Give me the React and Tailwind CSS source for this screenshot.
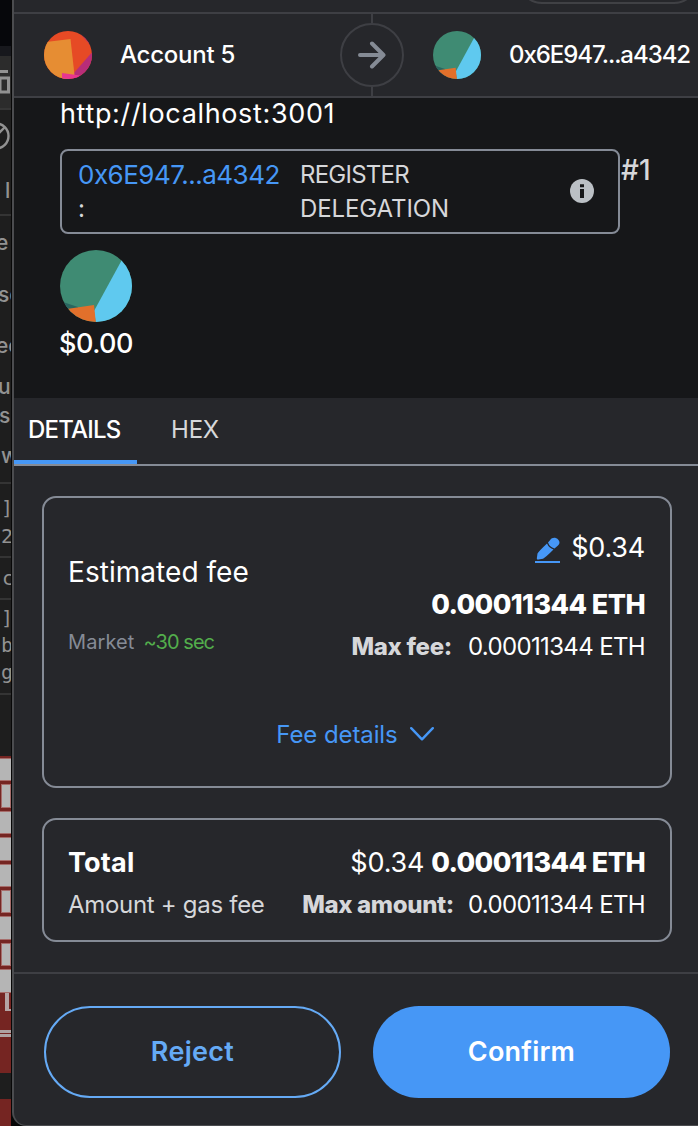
import React from "react";

function Jazzicon({ className }) {
  return (
    <svg viewBox="0 0 72 72" className={className}>
      <defs>
        <clipPath id="jazz-b"><circle cx="36" cy="36" r="36" /></clipPath>
      </defs>
      <g clipPath="url(#jazz-b)">
        <rect width="72" height="72" fill="#3f8b73" />
        <path d="M0 51 L18 57 L18 72 L0 72Z" fill="#2a6660" />
        <path d="M64 6 L34 61 L36 74 L74 74 L74 6Z" fill="#5fc9ef" />
        <path d="M0 60 L34 55 L36 74 L0 74Z" fill="#e2702b" />
      </g>
    </svg>
  );
}

function JazziconWarm({ className }) {
  return (
    <svg viewBox="0 0 48 48" className={className}>
      <defs>
        <clipPath id="jazz-a"><circle cx="24" cy="24" r="24" /></clipPath>
      </defs>
      <g clipPath="url(#jazz-a)">
        <rect width="48" height="48" fill="#e64a25" />
        <path d="M34 0 L48 0 L48 16Z" fill="#b22c76" />
        <path d="M50 19 L29 43 L30 50 L50 50Z" fill="#b82d79" />
        <path d="M-2 11.5 L26.500 8 L30.500 44 L20 50 L-2 50Z" fill="#e68d33" />
        <path d="M18 42 L36 44.500 L34 50 L18 50Z" fill="#e8368f" />
      </g>
    </svg>
  );
}

const pageLines = [
  { h: "h-[54px] -ml-[4px]", t: "e" },
  { h: "h-[50px] -ml-[2px]", t: "se" },
  { h: "h-[52px] -ml-[4px]", t: "ec" },
  { h: "h-[30px] -ml-[2px]", t: "u" },
  { h: "h-[28px] -ml-[1px]", t: "s." },
  { h: "h-[52px] pl-[1px]", t: "w" },
];

function Underlay() {
  return (
    <div className="flex h-[1126px] w-[11px] shrink-0 flex-col overflow-hidden bg-[#1e1e1e] text-[21px] font-medium text-[#929292]">
      <div className="h-[46px] shrink-0 bg-[#06070b]" />
      <div className="h-[10px] shrink-0 bg-[#17181d]" />
      <div className="h-[52px] shrink-0 bg-[#2c2c2c] pt-[13px]">
        <svg viewBox="0 0 11 26" className="h-[26px] w-[11px]" fill="none" stroke="#929292">
          <path d="M0 2.500 H8" strokeWidth="3" />
          <path d="M0 9 H8.500 V23 H0 Z" strokeWidth="3" />
        </svg>
      </div>
      <div className="h-[2px] shrink-0 bg-[#363636]" />
      <div className="h-[66px] shrink-0 pt-[11px]">
        <svg viewBox="0 0 11 30" className="h-[30px] w-[11px]" fill="none" stroke="#929292" strokeWidth="2.400">
          <circle cx="-4" cy="15" r="12.500" />
          <path d="M-2 13 L5 6" />
        </svg>
      </div>
      <div className="flex h-[38px] shrink-0 items-end pb-[7px] pl-[5px] leading-[32px]">l</div>
      <div className="h-[2px] shrink-0 bg-[#343434]" />
      {pageLines.map((l) => (
        <div key={l.t} className={`flex shrink-0 items-center whitespace-nowrap ${l.h}`}>{l.t}</div>
      ))}
      <div className="h-[2px] shrink-0 bg-[#343434]" />
      <div className="flex h-[72px] shrink-0 flex-col pt-[10px] font-['DejaVu_Sans_Mono',monospace] text-[20px] font-normal leading-[28px]">
        <span className="pl-px">]</span>
        <span className="pl-px">2</span>
      </div>
      <div className="h-[2px] shrink-0 bg-[#343434]" />
      <div className="flex h-[40px] shrink-0 items-center pl-[2px] font-['DejaVu_Sans_Mono',monospace] text-[20px] font-normal">c</div>
      <div className="h-[2px] shrink-0 bg-[#343434]" />
      <div className="flex h-[93px] shrink-0 flex-col pt-[5px] font-['DejaVu_Sans_Mono',monospace] text-[20px] font-normal leading-[27px]">
        <span className="pl-px">]</span>
        <span className="pl-px">b</span>
        <span className="pl-px">g</span>
      </div>
      <div className="h-[2px] shrink-0 bg-[#343434]" />
      <div className="h-[61px] shrink-0" />
      <div className="flex h-[317px] shrink-0 flex-col bg-[#752522] pt-[2px]">
        {[0, 1, 0, 0, 0, 1, 0, 1, 0].map((inset, i) => (
          <div key={i} className={inset ? "mb-[3px] ml-px h-[23.400px] shrink-0 border border-[#a66d6b] bg-[#b5b5b5]" : "mb-[3px] h-[23.400px] shrink-0 border-y border-[#a66d6b] bg-[#b5b5b5]"} />
        ))}
        <div className="-mt-[3px] ml-[5px] h-[18px] shrink-0 border-b-2 border-l-4 border-[#b5a5a5]" />
        <div className="mt-[19px] h-[7px] shrink-0 border-y-[3px] border-[#aea2a2]" />
      </div>
      <div className="h-[26px] shrink-0 bg-[#1e1e1e]" />
      <div className="h-[27px] shrink-0 bg-[#752522]" />
    </div>
  );
}

export default function App() {
  return (
    <div className="flex h-[1126px] w-[698px] overflow-hidden bg-[#070707] font-['Inter',sans-serif] text-white">
      <Underlay />
      <main className="ml-px flex h-[1126px] w-[686px] flex-col overflow-hidden rounded-bl-[14px] border-b border-l-2 border-[#4b4c4f] bg-[#26272b]">
        <div className="flex h-[12px] shrink-0 justify-end overflow-hidden">
          <div className="-mt-[44px] h-[48px] w-[180px] rounded-full border-2 border-[#404145]" />
        </div>

        <header className="flex h-[86px] shrink-0 items-center border-y-2 border-[#3e3f44] pl-[30px]">
          <JazziconWarm className="h-12 w-12 shrink-0" />
          <span className="ml-[28px] w-[220px] shrink-0 whitespace-nowrap text-[24px] font-medium tracking-[-0.25px]">Account 5</span>
          <div className="flex h-[82px] w-[64px] shrink-0 flex-col items-center">
            <div className="w-[2px] flex-1 bg-[#3e3f44]" />
            <div className="flex h-[64px] w-[64px] items-center justify-center rounded-full border-2 border-[#3e3f44]">
              <svg viewBox="0 0 28 28" className="h-7 w-7" fill="none" stroke="#858b95" strokeWidth="4" strokeLinecap="round" strokeLinejoin="round">
                <path d="M2 14 H25 M14 2.500 L25.500 14 L14 25.500" />
              </svg>
            </div>
            <div className="w-[2px] flex-1 bg-[#3e3f44]" />
          </div>
          <Jazzicon className="ml-[29px] h-12 w-12 shrink-0" />
          <span className="ml-[28px] whitespace-nowrap text-[24px] font-medium tracking-[-1.050px]">0x6E947...a4342</span>
        </header>

        <section className="flex h-[300px] shrink-0 flex-col bg-[#161719] pl-[46px]">
          <div className="h-[51px] whitespace-nowrap text-[27px] leading-[31px] tracking-[0.65px]">http://localhost:3001</div>
          <div className="flex">
            <div className="flex h-[85px] w-[560px] items-center rounded-[8px] border-2 border-[#858b96] px-4 text-[#d6d7da]">
              <div className="w-[222px] leading-[34px]">
                <div className="whitespace-nowrap text-[26px] tracking-[-0.5px] text-[#4697f6]">0x6E947...a4342</div>
                <div className="text-[24px]">:</div>
              </div>
              <div className="w-[190px] text-[24px] leading-[34px]">
                <div className="tracking-[-0.750px]">REGISTER</div>
                <div className="tracking-[-0.100px]">DELEGATION</div>
              </div>
              <svg viewBox="0 0 24 24" className="-mt-[2px] ml-auto mr-2 h-6 w-6">
                <circle cx="12" cy="12" r="12" fill="#bbc0c5" />
                <path d="M10 5.300 h4 v3 h-4z M10 10 h4 v9 h-4z" fill="#161719" />
              </svg>
            </div>
            <span className="ml-px mt-px text-[28px] font-medium leading-[40px] tracking-[0.2px] text-[#d6d7da]">#1</span>
          </div>
          <Jazzicon className="mt-4 h-[72px] w-[72px]" />
          <div className="-ml-px mt-[4px] text-[27px] font-medium leading-[36px] tracking-[-0.5px]">$0.00</div>
        </section>

        <nav className="-ml-[2px] flex h-[68px] shrink-0 border-b-2 border-[#858b96] text-[24px] leading-[64px]">
          <div className="w-[125px] border-b-4 border-[#4697f6] pl-[16px] font-medium tracking-[-0.8px]">DETAILS</div>
          <div className="pl-[34px] tracking-[-0.200px] text-[#d6d7da]">HEX</div>
        </nav>

        <div className="flex h-[506px] shrink-0 flex-col pl-[28px] pt-[30px]">
          <section className="flex h-[292px] w-[630px] flex-col rounded-[14px] border-2 border-[#858b96] px-6">
            <div className="flex h-[186px] justify-between">
              <div className="flex flex-col pt-[56px]">
                <div className="text-[28px] leading-[36px] tracking-[0.050px]">Estimated fee</div>
                <div className="mt-[38px] flex gap-[9px] text-[20px] leading-[28px]">
                  <span className="tracking-[0.1px] text-[#858b96]">Market</span>
                  <span className="tracking-[-0.950px] text-[#53ad4c]">~30 sec</span>
                </div>
              </div>
              <div className="flex flex-col items-end whitespace-nowrap pr-px pt-[32px]">
                <div className="flex items-center text-[27px] leading-[36px] tracking-[-0.2px]">
                  <svg viewBox="0 0 26 28" className="mr-[10px] mt-[1px] h-7 w-[26px]" fill="#4697f6">
                    <path d="M12 8.500 Q4 16 2.500 18.500 L1.800 23.500 Q2 25 3.500 24.500 L8 23.700 Q10 23 18.500 14.500 Q14 13 12 8.500Z" />
                    <path d="M13 7.500 L15 5.300 C19 -1 28 6 23 10.500 L19.500 13.500 Q14.500 12 13 7.500Z" />
                    <rect x="0" y="26" width="25" height="2" />
                  </svg>
                  $0.34
                </div>
                <div className="mt-[20px] text-[27px] font-extrabold leading-[38px] tracking-[-0.6px]">0.00011344 ETH</div>
                <div className="mt-[6px] flex gap-4 text-[24px] leading-[34px]">
                  <span className="font-extrabold tracking-[-0.3px] text-[#d6d7da]">Max fee:</span>
                  <span className="tracking-[-0.650px]">0.00011344 ETH</span>
                </div>
              </div>
            </div>
            <div className="mt-[34px] flex items-center justify-center gap-[12px] pr-1 text-[24px] leading-[34px] text-[#4697f6]">
              <span className="tracking-[-0.1px]">Fee details</span>
              <svg viewBox="0 0 24 14" className="-mt-[3px] h-[14px] w-6" fill="none" stroke="currentColor" strokeWidth="2.400" strokeLinecap="round" strokeLinejoin="round">
                <path d="M1.200 1.200 L12 12.300 L22.800 1.200" />
              </svg>
            </div>
          </section>

          <section className="mt-[30px] flex h-[124px] w-[630px] flex-col whitespace-nowrap rounded-[14px] border-2 border-[#858b96] pl-6 pr-[25px] pt-[22px]">
            <div className="flex justify-between text-[27px] leading-[42px]">
              <span className="font-bold tracking-[0.2px]">Total</span>
              <div className="flex gap-[7px]">
                <span className="tracking-[-0.2px]">$0.34</span>
                <span className="font-extrabold tracking-[-0.6px]">0.00011344 ETH</span>
              </div>
            </div>
            <div className="mt-[2px] flex justify-between text-[24px] leading-[38px]">
              <span className="tracking-[-0.300px] text-[#d6d7da]">Amount + gas fee</span>
              <div className="flex gap-[14px]">
                <span className="font-extrabold tracking-[-0.350px] text-[#d6d7da]">Max amount:</span>
                <span className="tracking-[-0.650px]">0.00011344 ETH</span>
              </div>
            </div>
          </section>
        </div>

        <footer className="flex flex-1 gap-8 border-t-2 border-[#3e3f44] pl-[30px] pt-8 text-[27px] font-semibold">
          <button className="h-[92px] w-[297px] rounded-full border-2 border-[#65aaf5] tracking-[0.300px] text-[#65aaf5]">Reject</button>
          <button className="h-[92px] w-[297px] rounded-full bg-[#4697f6] tracking-[0.200px] text-white">Confirm</button>
        </footer>
      </main>
    </div>
  );
}
